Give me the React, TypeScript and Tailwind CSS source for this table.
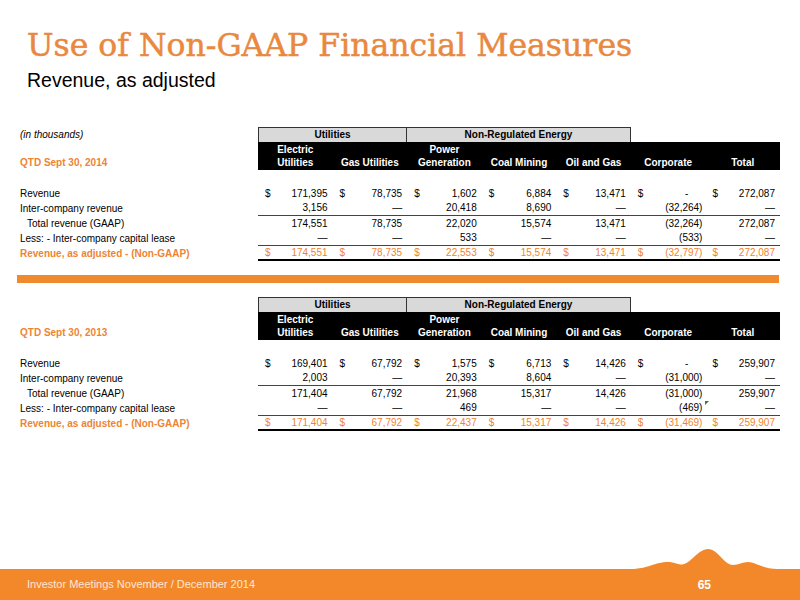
const columns = [
  ['Electric', 'Utilities'],
  ['', 'Gas Utilities'],
  ['Power', 'Generation'],
  ['', 'Coal Mining'],
  ['', 'Oil and Gas'],
  ['', 'Corporate'],
  ['', 'Total'],
]

type Row = { label: string; values: string[]; dollar?: boolean; indent?: boolean; border?: 'thin' | 'thick'; orange?: boolean }

type TableData = { period: string; note?: string; rows: Row[]; flagAt?: number }

const tables: TableData[] = [
  {
    period: 'QTD Sept 30, 2014',
    note: '(in thousands)',
    rows: [
      { label: 'Revenue', dollar: true, values: ['171,395', '78,735', '1,602', '6,884', '13,471', '-', '272,087'] },
      { label: 'Inter-company revenue', border: 'thin', values: ['3,156', '—', '20,418', '8,690', '—', '(32,264)', '—'] },
      { label: 'Total revenue (GAAP)', indent: true, values: ['174,551', '78,735', '22,020', '15,574', '13,471', '(32,264)', '272,087'] },
      { label: 'Less: - Inter-company capital lease', border: 'thin', values: ['—', '—', '533', '—', '—', '(533)', '—'] },
      { label: 'Revenue, as adjusted - (Non-GAAP)', dollar: true, orange: true, border: 'thick', values: ['174,551', '78,735', '22,553', '15,574', '13,471', '(32,797)', '272,087'] },
    ],
  },
  {
    period: 'QTD Sept 30, 2013',
    flagAt: 3,
    rows: [
      { label: 'Revenue', dollar: true, values: ['169,401', '67,792', '1,575', '6,713', '14,426', '-', '259,907'] },
      { label: 'Inter-company revenue', border: 'thin', values: ['2,003', '—', '20,393', '8,604', '—', '(31,000)', '—'] },
      { label: 'Total revenue (GAAP)', indent: true, values: ['171,404', '67,792', '21,968', '15,317', '14,426', '(31,000)', '259,907'] },
      { label: 'Less: - Inter-company capital lease', border: 'thin', values: ['—', '—', '469', '—', '—', '(469)', '—'] },
      { label: 'Revenue, as adjusted - (Non-GAAP)', dollar: true, orange: true, border: 'thick', values: ['171,404', '67,792', '22,437', '15,317', '14,426', '(31,469)', '259,907'] },
    ],
  },
]

const grid = 'grid grid-cols-[238px_repeat(7,minmax(0,1fr))]'

// accounting format: dashes sit in, parens hang out
const valuePad = (v: string) => {
  if (v === '-') return 'pr-[17px]'
  if (v.startsWith('(')) return 'pr-[3px]'
  return 'pr-[5px]'
}

const FinTable = ({ data }: { data: TableData }) => {
  return (
    <div className="ml-[20px] w-[760px] text-[10px] leading-none">
      <div className={`${grid} h-[15px]`}>
        <div className="flex items-center italic text-black">{data.note}</div>
        <div className="col-span-2 bg-[#d9d9d9] border border-b-0 border-[#333] flex items-center justify-center font-bold">
          Utilities
        </div>
        <div className="col-span-3 bg-[#d9d9d9] border border-l-0 border-b-0 border-[#333] flex items-center justify-center font-bold">
          Non-Regulated Energy
        </div>
      </div>
      <div className={`${grid} h-[28px]`}>
        <div className="flex items-end pb-[2px] font-bold text-[#ee8433]">{data.period}</div>
        {columns.map((c, i) => (
          <div key={i} className="bg-black text-white font-bold flex flex-col justify-end items-center pb-[1px] leading-[13px]">
            {c[0] && <span>{c[0]}</span>}
            <span>{c[1]}</span>
          </div>
        ))}
      </div>
      <div className="h-[16px]" />
      {data.rows.map((row, ri) => (
        <div key={ri} className={`${grid} h-[15px] ${row.orange ? 'text-[#ee8433] font-bold' : 'text-black'}`}>
          <div className={`flex items-center ${row.indent ? 'pl-[7px]' : ''}`}>{row.label}</div>
          {row.values.map((v, ci) => (
            <div
              key={ci}
              className={`relative flex items-center justify-between pl-[7px] ${valuePad(v)} ${
                row.border === 'thin' ? 'border-b border-[#444]' : row.border === 'thick' ? 'border-b-2 border-black' : ''
              } ${row.orange ? 'font-normal' : ''}`}
            >
              <span>{row.dollar ? '$' : ''}</span>
              <span>{v}</span>
              {data.flagAt === ri && ci === 6 && (
                <span className="absolute left-0 top-0 w-0 h-0 border-t-[4px] border-t-[#1e8c1e] border-r-[4px] border-r-transparent" />
              )}
            </div>
          ))}
        </div>
      ))}
    </div>
  )
}

const App = () => {
  return (
    <div className="w-[800px] h-[600px] bg-white flex flex-col overflow-hidden font-['Liberation_Sans',Arial,sans-serif]">
      <h1 className="mt-[30px] ml-[27px] text-[31.5px] leading-none text-[#e9883f] font-['DejaVu_Serif',serif] font-normal [-webkit-text-stroke:0.5px_#e9883f]">
        Use of Non-GAAP Financial Measures
      </h1>
      <div className="mt-[9px] ml-[27px] text-[19.5px] leading-none text-black">Revenue, as adjusted</div>

      <div className="mt-[37px]">
        <FinTable data={tables[0]} />
      </div>

      <div className="mt-[14px] ml-[17px] w-[762px] h-[8px] bg-[#f08a2e]" />

      <div className="mt-[14px]">
        <FinTable data={tables[1]} />
      </div>

      <div className="flex-1" />

      <div className="relative h-[31px] bg-[#f3882b] flex items-center justify-between pl-[27px] pr-[89px]">
        <svg className="absolute left-0 top-[-25px] w-[800px] h-[26px]" viewBox="0 0 800 26">
          <path
            d="M630 26 L630 25 C648 25 655 18 668 18 C674 18 677 20.5 682 20.5 C690 20.5 698 5 708 5 C718 5 724 21 733 21 C739 21 742 18 748 18 C756 18 762 25 778 25 L778 26 Z"
            fill="#f3882b"
          />
        </svg>
        <span className="text-[11px] text-[#fde6d2]">Investor Meetings November / December 2014</span>
        <span className="text-[12px] font-bold text-white">65</span>
      </div>
    </div>
  )
}

export default App
